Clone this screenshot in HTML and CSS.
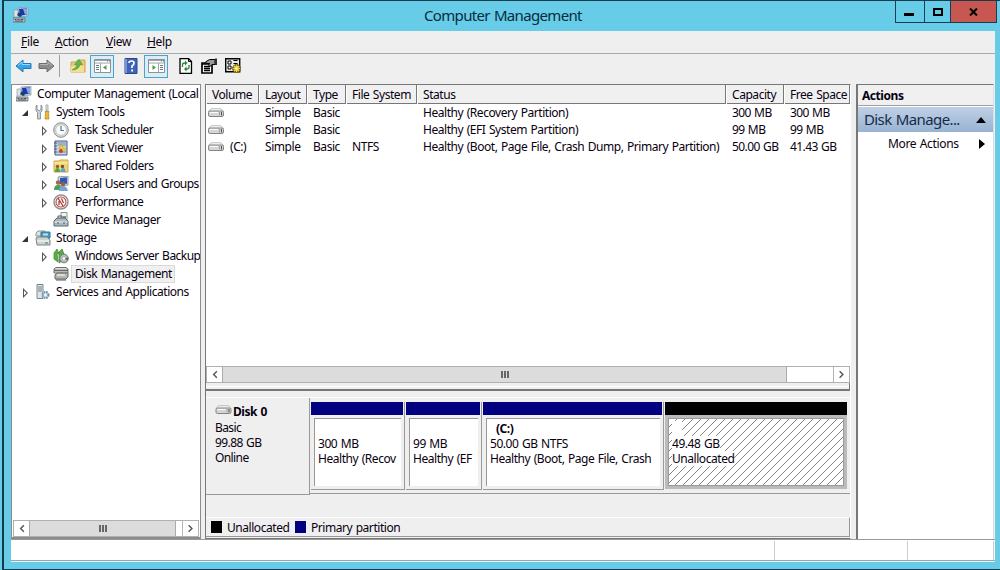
FILE: index.html
```html
<!DOCTYPE html>
<html lang="en">
<head>
  <meta charset="UTF-8">
  <title>Computer Management</title>
  <link rel="stylesheet" href="styles.css">
</head>
<body>
  <!-- shared icons -->
  <svg class="defs" width="0" height="0">
    <symbol id="computer" viewBox="0 0 16 16">
      <path d="M5 1l10-1v9l-9 1z" fill="#c8d3dc" stroke="#78899a" stroke-width=".6"/>
      <path d="M6 2l8-.8v6.6L7 8.5z" fill="#1838a8"/><path d="M10 2l4-.5v6l-2 .3z" fill="#7fa9e6"/>
      <path d="M1 3h4v7H1z" fill="#dfe3e4" stroke="#83909a" stroke-width=".6"/>
      <path d="M4 8l2-3 3 4-2 1z" fill="#183b70"/>
      <path d="M0 11h12v4H0z" fill="#c4cacd" stroke="#59666f" stroke-width=".8"/>
      <path d="M1.500 12.500h2m1 0h2m1 0h3M2 14h8" stroke="#48545c"/>
    </symbol>
    <symbol id="drive" viewBox="0 0 16 10">
      <path d="M3 .7h10l2.500 2.800H.5z" fill="#f5f5f5" stroke="#aaa" stroke-width=".7"/>
      <rect x=".5" y="3" width="15" height="5.500" rx="1.500" fill="#d4d5d4" stroke="#858585"/>
      <path d="M2 4.500h8" stroke="#fafafa"/><path d="M11.500 4v3.500" stroke="#9aa89c"/><path d="M13.500 4v3.500" stroke="#395e40"/>
    </symbol>
  </svg>

  <div class="window">
    <header class="titlebar">
      <svg class="app-icon" width="16" height="16"><use href="#computer"/></svg>
      <h1>Computer Management</h1>
      <div class="controls">
        <button class="min" aria-label="Minimize"><svg width="28" height="21"><path d="M8 13.500h10" stroke="#000" stroke-width="3"/></svg></button>
        <button class="max" aria-label="Maximize"><svg width="25" height="21"><path d="M9 8h8v6H9z" fill="none" stroke="#000" stroke-width="2"/></svg></button>
        <button class="close" aria-label="Close"><svg width="45" height="21"><path d="M19 7.500l7 7M26 7.500l-7 7" stroke="#000" stroke-width="2"/></svg></button>
      </div>
    </header>

    <div class="content">
      <nav class="menu">
        <span class="m-file"><u>F</u>ile</span><span class="m-action"><u>A</u>ction</span><span class="m-view"><u>V</u>iew</span><span class="m-help"><u>H</u>elp</span>
      </nav>

      <div class="toolbar">
        <svg class="t-back" width="17" height="16" viewBox="0 0 17 16"><path d="M1 8l7-6v3.500h8v5H8V14z" fill="#38a5e8" stroke="#2877b3"/><path d="M3 7.500l4-3.500v2.500h8" stroke="#96d9fa" fill="none"/></svg>
        <svg class="t-forward" width="17" height="16" viewBox="0 0 17 16"><path d="M16 8L9 2v3.500H1v5h8V14z" fill="#8c8c8c" stroke="#6d6d6d"/><path d="M2 6.500h8V4l4 3.500" stroke="#b5b5b5" fill="none"/></svg>
        <i class="tool-sep"></i>
        <svg class="t-up" width="16" height="16" viewBox="0 0 16 16"><path d="M1 4h5l1.500-2H15v12H1z" fill="#e8ca70" stroke="#caa653"/><path d="M1 8h13v6H1z" fill="#f4df91"/><path d="M2.500 11.500q4-1 4.500-5H4.500L9 1.500l3.500 5H10q-1 5-7.500 5.500z" fill="#60b946" stroke="#43943a" stroke-width=".6"/></svg>
        <span class="pressed"><svg width="17" height="14" viewBox="0 0 17 14"><path d="M.5.500h16v13H.5z" fill="#fff" stroke="#8b9298"/><path d="M1 1.500h15M1 4h15" stroke="#9ba4aa"/><path d="M13 2h1m1 0h1" stroke="#486"/><path d="M6.500 4v9" stroke="#9ba4aa"/><path d="M2 6.500h3m-3 2h3m-3 2h3" stroke="#617887"/><path d="M12.500 6v5L9 8.500z" fill="#48a03d"/></svg></span>
        <svg class="t-help" width="14" height="16" viewBox="0 0 14 16"><path d="M1 .5h12v15H1z" fill="#4063b8" stroke="#28468c"/><path d="M2 1v14" stroke="#7894d1" stroke-width="2"/><path d="M5 5q0-2 2.500-2T10 5t-2 3v2" fill="none" stroke="#fff" stroke-width="1.700"/><path d="M7.200 11.500H9v2H7.200z" fill="#fff"/></svg>
        <span class="pressed second"><svg width="17" height="14" viewBox="0 0 17 14"><path d="M.5.500h16v13H.5z" fill="#fff" stroke="#8b9298"/><path d="M1 1.500h15M1 4h15" stroke="#9ba4aa"/><path d="M13 2h1m1 0h1" stroke="#486"/><path d="M10.500 4v9" stroke="#9ba4aa"/><path d="M12 6.500h3m-3 2h3m-3 2h3" stroke="#617887"/><path d="M4.500 6v5L8 8.500z" fill="#48a03d"/></svg></span>
        <svg class="t-refresh" width="14" height="16" viewBox="0 0 14 16"><path d="M1 .5h8.500l3 3v12H1z" fill="#fff" stroke="#000" stroke-width="1.300"/><path d="M9.500.500v3h3" fill="none" stroke="#000"/><path d="M3.500 9V6.500Q3.500 5 6 5h1M10 7v2.500Q10 11 7.500 11H6" fill="none" stroke="#218a32" stroke-width="1.300"/><path d="M6 2.500v5L8.500 5zM7.500 8.500v5L5 11z" fill="#218a32"/></svg>
        <svg class="t-props" width="16" height="16" viewBox="0 0 16 16"><path d="M1 5h10v10H1z" fill="#fff" stroke="#000" stroke-width="1.700"/><path d="M1 6h9M3 8.500h6m-6 2h6m-6 2h6" stroke="#000" stroke-width="1.400"/><path d="M4.500 4l4-2.500H14v5h-3L9 8.500 7.500 7l1-1.500H6z" fill="#999" stroke="#000"/><path d="M14 .5h2V7h-2z" fill="#333"/></svg>
        <svg class="t-settings" width="17" height="16" viewBox="0 0 17 16"><path d="M.7.700h14v13H.7z" fill="#e9e9e9" stroke="#000" stroke-width="1.400"/><path d="M3 3h3v3H3zm5.500-.5h4M8.500 5.500h4M3 8h3v3H3z" fill="#fff" stroke="#000"/><path d="M11.500 6v9M7 10.500h9M8.500 7.500l6 6m0-6l-6 6" stroke="#443b09" stroke-width="2.600"/><path d="M11.500 6.500v8M7.500 10.500h8M8.800 7.800l5.400 5.400m0-5.400l-5.400 5.400" stroke="#f1d83d" stroke-width="1.600"/><circle cx="11.500" cy="10.500" r="1" fill="#fff"/></svg>
      </div>

      <main class="panes">
        <aside class="tree">
          <div class="tree-items">
            <div class="row root"><svg width="16" height="16"><use href="#computer"/></svg><span>Computer Management (Local</span></div>
            <div class="row group"><i class="open"></i>
              <svg width="16" height="16" viewBox="0 0 16 16"><path d="M2 1v4l2 2 2-2V1l1 1v5L5.500 8.500V15h-3V8.500L1 7V2z" fill="#cad0d3" stroke="#7b858b" stroke-width=".8"/><path d="M11 1h2v6h-2z" fill="#e4e9eb" stroke="#7b858b" stroke-width=".6"/><path d="M10 7.500h4l-.5 2 .5 5.500h-4l.5-5.500z" fill="#efb72d" stroke="#b48121" stroke-width=".7"/></svg><span>System Tools</span></div>
            <div class="row leaf"><i class="shut"></i>
              <svg width="16" height="16" viewBox="0 0 16 16"><circle cx="8" cy="8" r="7.300" fill="#d9dcd8" stroke="#8b8f8d"/><circle cx="8" cy="8" r="5.300" fill="#f8fafc" stroke="#b1b9be" stroke-width=".7"/><path d="M8 4v4.500h3" fill="none" stroke="#53738f" stroke-width="1.200"/></svg><span>Task Scheduler</span></div>
            <div class="row leaf"><i class="shut"></i>
              <svg width="16" height="16" viewBox="0 0 16 16"><path d="M2 1h12v14H2z" fill="#c6d4e4" stroke="#465b86"/><path d="M4.500 3H13m-8.500 2H13m-8.500 7H13" stroke="#778da8"/><path d="M1 3h3M1 6h3M1 9h3M1 12h3" stroke="#46577b"/><path d="M6 9l2-5 3 5z" fill="#f0ce3d" stroke="#b19028" stroke-width=".5"/><circle cx="8" cy="11" r="2" fill="#cf3b36"/><circle cx="11" cy="9" r="2" fill="#e9c02f"/></svg><span>Event Viewer</span></div>
            <div class="row leaf"><i class="shut"></i>
              <svg width="16" height="16" viewBox="0 0 16 16"><path d="M1 3h5l1-1h8v12H1z" fill="#f0d579" stroke="#c9a848"/><path d="M1 5h14" stroke="#fff0aa"/><circle cx="4.500" cy="8.500" r="1.700" fill="#92602e"/><circle cx="9.500" cy="8.500" r="1.700" fill="#735125"/><path d="M2 14q0-4 2.500-4T7 14z" fill="#56a24d"/><path d="M7.500 14q0-4 2.500-4t2.500 4z" fill="#5ba7c6"/></svg><span>Shared Folders</span></div>
            <div class="row leaf"><i class="shut"></i>
              <svg width="16" height="16" viewBox="0 0 16 16"><path d="M5 1l10-1v9L6 10z" fill="#d4dee6" stroke="#8a9bab"/><path d="M7 2l7-.8v6.500L7 8z" fill="#3156ba"/><circle cx="5" cy="6.500" r="2.200" fill="#a16c41"/><circle cx="10" cy="8" r="2.200" fill="#986334"/><path d="M1 14q0-5 4-5t4 5z" fill="#4d9e60"/><path d="M6 15q0-5 4-5t5 5z" fill="#7ba4d2"/></svg><span class="snug">Local Users and Groups</span></div>
            <div class="row leaf"><i class="shut"></i>
              <svg width="16" height="16" viewBox="0 0 16 16"><circle cx="8" cy="8" r="7" fill="#fff" stroke="#8f918f" stroke-width="1.500"/><circle cx="8" cy="8" r="5" fill="#fafafa" stroke="#bd4b43" stroke-width="1.100"/><path d="M5 4l5 8M8.500 4.500L10.500 9M6 7v4" stroke="#a83432" stroke-width="1.200"/></svg><span>Performance</span></div>
            <div class="row leaf"><i></i>
              <svg width="16" height="16" viewBox="0 0 16 16"><path d="M8 .5h6v7H8z" fill="#f1f5ef" stroke="#86968a"/><path d="M10 4h3v3h-3z" fill="#69a067"/><path d="M1 9l3-3h8l3 3v5H1z" fill="#acb7bd" stroke="#5d6b73"/><path d="M1.500 10h13" stroke="#edf1f3"/><path d="M5 6V4h4v2M5 10v2m6-2v2" fill="none" stroke="#536169"/></svg><span>Device Manager</span></div>
            <div class="row group"><i class="open"></i>
              <svg width="16" height="16" viewBox="0 0 16 16"><path d="M1 3l2-2h7v5H1z" fill="#dde2e2" stroke="#8b9595"/><path d="M6 2h9v6H6z" fill="#3c9acb" stroke="#46738b"/><path d="M8 3.500h5v2H8z" fill="#b8e4f1"/><path d="M1 8l2-1h9l3 3v5H2z" fill="#cdd3d3" stroke="#788486"/><path d="M2 11h12" stroke="#fff"/><path d="M10 13h3" stroke="#45824c"/></svg><span>Storage</span></div>
            <div class="row leaf"><i class="shut"></i>
              <svg width="16" height="16" viewBox="0 0 16 16"><path d="M1 5l3-4 2 5-2-1 1 9-4-3zM6 4l3-3 2 5-2-1v8l-3 2z" fill="#5daf43" stroke="#36832e" stroke-width=".7"/><circle cx="11" cy="10.500" r="4.300" fill="#b5bbb7" stroke="#6f7b75"/><path d="M11 10.500l4-1v3z" fill="#60645c"/><circle cx="11" cy="10.500" r="1.300" fill="#fff"/></svg><span class="snug">Windows Server Backup</span></div>
            <div class="row leaf selected"><i></i>
              <svg width="16" height="16" viewBox="0 0 16 16"><path d="M1 3l2-1.500h10L15 3v4H1z" fill="#d9dad4" stroke="#6e716c"/><path d="M1 4.500h14" stroke="#666" stroke-width="1.500"/><path d="M4 7h11v4l-2 2H2V9z" fill="#b5b6b0" stroke="#686b66"/><path d="M4 9h8" stroke="#fff"/><path d="M3 14h10" stroke="#555"/></svg><span>Disk Management</span></div>
            <div class="row group"><i class="shut"></i>
              <svg width="16" height="16" viewBox="0 0 16 16"><path d="M2 .5h6v14H2z" fill="#dee3e5" stroke="#7b878f"/><path d="M3 3h4M3 5h4M3 7h4" stroke="#75858d"/><circle cx="10.500" cy="11" r="3" fill="#c5dced" stroke="#6a92ad" stroke-width="2" stroke-dasharray="1.600 .8"/><circle cx="10.500" cy="11" r="1" fill="#fff"/></svg><span>Services and Applications</span></div>
          </div>
          <div class="scroll tree-scroll"><svg class="arrow" viewBox="0 0 16 16"><path d="M10 4.500L6.500 8l3.500 3.500"/></svg><div class="thumb"><i></i></div><svg class="arrow right" viewBox="0 0 16 16"><path d="M6 4.500L9.500 8 6 11.500"/></svg></div>
        </aside>

        <section class="middle">
          <div class="volumes">
            <div class="cols head"><span>Volume</span><span>Layout</span><span>Type</span><span>File System</span><span>Status</span><span>Capacity</span><span>Free Space</span></div>
            <div class="cols"><span class="vol"><svg width="16" height="10"><use href="#drive"/></svg></span><span>Simple</span><span>Basic</span><span></span><span>Healthy (Recovery Partition)</span><span>300 MB</span><span>300 MB</span></div>
            <div class="cols"><span class="vol"><svg width="16" height="10"><use href="#drive"/></svg></span><span>Simple</span><span>Basic</span><span></span><span>Healthy (EFI System Partition)</span><span>99 MB</span><span>99 MB</span></div>
            <div class="cols"><span class="vol"><svg width="16" height="10"><use href="#drive"/></svg>(C:)</span><span>Simple</span><span>Basic</span><span>NTFS</span><span>Healthy (Boot, Page File, Crash Dump, Primary Partition)</span><span>50.00 GB</span><span>41.43 GB</span></div>
          </div>
          <div class="scroll list-scroll"><svg class="arrow" viewBox="0 0 16 16"><path d="M10 4.500L6.500 8l3.500 3.500"/></svg><div class="thumb"><i></i></div><svg class="arrow right" viewBox="0 0 16 16"><path d="M6 4.500L9.500 8 6 11.500"/></svg></div>
          <div class="splitter"></div>
          <div class="disk">
            <div class="disk-label"><b><svg width="17" height="10"><use href="#drive"/></svg>Disk 0</b><span>Basic</span><span>99.88 GB</span><span>Online</span></div>
            <div class="parts">
              <div class="part p1"><div class="bar"></div><div class="box"><div><b></b><span>300 MB</span><span>Healthy (Recov</span></div></div></div>
              <div class="part p2"><div class="bar"></div><div class="box"><div><b></b><span>99 MB</span><span>Healthy (EF</span></div></div></div>
              <div class="part p3"><div class="bar"></div><div class="box"><div><b>(C:)</b><span>50.00 GB NTFS</span><span>Healthy (Boot, Page File, Crash</span></div></div></div>
              <div class="part free"><div class="bar"></div><div class="box"><div><b></b><span>49.48 GB</span><span>Unallocated</span></div></div></div>
            </div>
          </div>
          <div class="legend"><i class="black"></i><span class="l-un">Unallocated</span><i class="navy"></i><span>Primary partition</span></div>
        </section>

        <aside class="actions">
          <h2>Actions</h2>
          <div class="action-title"><span>Disk Manage...</span><svg width="10" height="6"><path d="M0 6l5-6 5 6z"/></svg></div>
          <div class="more"><span>More Actions</span><svg width="6" height="10"><path d="M0 0l6 5-6 5z"/></svg></div>
        </aside>
      </main>

      <footer class="status"><span></span><span></span><span></span></footer>
    </div>
  </div>
</body>
</html>
```
FILE: styles.css
```css
* {
  box-sizing: border-box;
}
body {
  margin: 0;
  width: 1000px;
  height: 570px;
  overflow: hidden;
  background: #66cce8;
  color: #080010;
  font-family: "Noto Sans", "Open Sans", sans-serif;
  font-size: 12px;
  line-height: 15px;
  letter-spacing: -0.45px;
  word-spacing: 0.8px;
  white-space: nowrap;
}
h1, h2 {
  margin: 0;
}
svg {
  display: block;
  flex: none;
}
.defs {
  display: none;
}
.window {
  height: 570px;
  margin-left: 2px;
  border: 1px solid #183b4b;
  border-left-width: 2px;
  border-right: 0;
  padding: 0 5px 0 7px;
}

/* title bar */
.titlebar {
  height: 30px;
  display: flex;
}
.app-icon {
  margin: 6px 0 0 2px;
}
.titlebar h1 {
  flex: 1;
  padding-left: 395px;
  font-size: 15px;
  line-height: 29px;
  letter-spacing: -0.66px;
  font-weight: normal;
  color: #082c3d;
}
.controls {
  display: flex;
  height: 22px;
  margin-right: -2px;
  border: 1px solid #173f50;
  border-top: 0;
}
.controls button {
  border: 0;
  padding: 0;
  background: #66cce8;
}
.controls .max {
  border-left: 1px solid #173f50;
  border-right: 1px solid #173f50;
}
.controls .close {
  background: #c75750;
}
.controls svg {
  margin-top: -1px;
}

.content {
  height: 531px;
  background: #efefef;
}
.menu {
  height: 23px;
  display: flex;
  border-bottom: 1px solid #aaa;
  padding-left: 10px;
  line-height: 22px;
  letter-spacing: -0.3px;
}
.menu u {
  text-underline-offset: 1px;
}
.m-file {
  width: 34px;
}
.m-action {
  width: 51px;
}
.m-view {
  width: 41px;
}

/* toolbar */
.toolbar {
  height: 30px;
  padding: 0 0 6px 4px;
  display: flex;
  align-items: center;
}
.t-forward {
  margin-left: 6px;
}
.tool-sep {
  width: 1px;
  height: 22px;
  margin: 0 10px 0 4px;
  background: #a0a0a0;
}
.pressed {
  display: flex;
  align-items: center;
  justify-content: center;
  width: 24px;
  height: 23px;
  margin: 0 10px 0 4px;
  border: 1px solid #4ca3cf;
  background: #dcecf5;
}
.pressed.second {
  margin: 0 11px 0 6px;
}
.t-props {
  margin-left: 8px;
}
.t-settings {
  margin-left: 8px;
}

/* panes */
.panes {
  height: 455px;
  display: flex;
}
.tree {
  width: 190px;
  display: flex;
  flex-direction: column;
  border: 1px solid #8c8c8c;
  border-bottom-width: 2px;
  background: #fff;
}
.tree-items {
  flex: 1;
  overflow: hidden;
}
.row {
  display: flex;
  align-items: center;
  height: 18px;
}
.row.root {
  padding-left: 4px;
}
.row.group {
  padding-left: 9px;
}
.row.leaf {
  padding-left: 28px;
}
.row > i {
  width: 14px;
  height: 10px;
  flex: none;
}
.row span {
  padding: 0 3px;
  margin-left: 1px;
  line-height: 16px;
  border: 1px solid transparent;
}
.row > i.open {
  clip-path: polygon(7px 3px, 7px 9px, 1px 9px);
  background: #333;
}
.row > i.shut {
  margin-top: 2px;
  background: #555;
  clip-path: polygon(evenodd, 2px 0, 7px 5px, 2px 10px, 2px 0, 3px 2.500px, 3px 7.500px, 5.500px 5px, 3px 2.500px);
}
.row.leaf span {
  margin-left: 2px;
}
.row.leaf > i {
  width: 13px;
}
.row .snug {
  padding-right: 0;
  border-right: 0;
  letter-spacing: -0.54px;
}
.selected span {
  padding-right: 2px;
  background: #f0f0f0;
  border-color: #d9d9d9;
}

/* scrollbars */
.scroll {
  display: flex;
  height: 17px;
  border: 1px solid #b0b0b0;
  background: #fff;
}
.arrow {
  width: 16px;
  height: 15px;
  fill: none;
  stroke: #555;
  stroke-width: 1.500;
}
.arrow.right {
  margin-left: auto;
  border-left: 1px solid #b5b5b5;
}
.thumb {
  display: flex;
  align-items: center;
  justify-content: center;
  background: #dcdcdc;
  border: 1px solid #aaa;
  border-width: 0 1px;
}
.thumb i {
  width: 8px;
  height: 7px;
  background: repeating-linear-gradient(90deg, #666 0 2px, #dcdcdc 2px 3px);
}
.tree-scroll {
  margin: 0 1px;
}
.tree-scroll .thumb {
  width: 147px;
  margin-left: -1px;
}
.list-scroll .thumb {
  width: 565px;
  margin-left: -1px;
}

/* volume list and disk map */
.middle {
  width: 646px;
  margin-left: 4px;
  display: flex;
  flex-direction: column;
  border: 1px solid #777;
  border-right-color: #fff;
}
.volumes {
  height: 281px;
  background: #fff;
}
.cols {
  display: grid;
  grid-template-columns: 53px 48px 39px 71px 309px 58px 66px;
  height: 17px;
  line-height: 17px;
}
.cols span {
  padding-left: 6px;
}
.cols span:nth-child(n+6) {
  letter-spacing: -0.6px;
}
.cols .vol {
  display: flex;
  align-items: center;
  gap: 6px;
  padding-left: 2px;
}
.cols.head {
  height: 19px;
  line-height: 19px;
  background: #f0f0f0;
  border-bottom: 1px solid #777;
}
.cols.head span {
  border-right: 1px solid #777;
  border-left: 1px solid #fff;
  padding-left: 5px;
  letter-spacing: -0.45px;
}
.splitter {
  height: 8px;
  border: solid #777;
  border-width: 0 1px 2px 0;
  background: linear-gradient(#efefef 3px, #fff 3px, #fff 4px, #efefef 4px);
}
.disk {
  height: 98px;
  margin-top: 6px;
  display: flex;
  border-top: 1px solid #fff;
}
.disk-label {
  flex: none;
  width: 104px;
  padding: 5px 0 0 9px;
  border-right: 1px solid #999;
  border-bottom: 1px solid #999;
}
.disk-label b {
  display: flex;
  line-height: 17px;
}
.disk-label b svg {
  margin-top: 2px;
  margin-right: 1px;
}
.disk-label span {
  display: block;
  letter-spacing: -0.6px;
}
.parts {
  flex: 1;
  display: flex;
  height: 96px;
  padding: 4px 3px 3px 1px;
  border-bottom: 1px solid #999;
}
.part {
  flex: none;
  border-right: 1px solid #999;
  border-bottom: 1px solid #999;
}
.p1 {
  width: 94px;
}
.p2 {
  width: 76px;
  margin-left: 1px;
}
.p3 {
  width: 181px;
  margin-left: 1px;
}
.bar {
  height: 13px;
  margin-right: 1px;
  background: #000080;
}
.box {
  height: 74px;
  padding: 3px;
}
.box div {
  height: 68px;
  overflow: hidden;
  padding: 2px 0 0 3px;
  background: #fff;
  border: 1px solid #999;
  border-width: 1px 0 0 1px;
}
.box b {
  display: block;
  height: 15px;
  padding-left: 6px;
}
.box span {
  display: block;
  width: fit-content;
}
.free {
  width: 182px;
  margin-left: 1px;
  border: 0;
}
.free .bar {
  margin: 0;
  background: #000;
}
.free .box {
  background: #bbb;
}
.free .box div {
  border: 1px solid #999;
  background: repeating-linear-gradient(135deg, #fff 0 5px, #888 5px 5.660px);
}
.free .box b {
  width: 10px;
  background: #fff;
}
.free .box span {
  background: #fff;
}
.legend {
  height: 20px;
  margin-top: auto;
  margin-bottom: 1px;
  display: flex;
  align-items: center;
  padding-left: 5px;
  border: solid #999;
  border-width: 0 1px 1px 0;
  border-top: 1px solid #fff;
}
.legend i {
  width: 11px;
  height: 12px;
  margin-right: 5px;
}
.legend .black {
  background: #000;
}
.legend .navy {
  background: #000080;
}
.l-un {
  width: 68px;
}

/* actions */
.actions {
  width: 138px;
  margin-left: 5px;
  border: solid #777;
  border-width: 1px 0 0 2px;
  border-right: 1px solid #ddd;
  background: #fff;
}
.actions h2 {
  height: 21px;
  padding-left: 4px;
  font-size: 12px;
  line-height: 21px;
  background: #f0f0f0;
  border-bottom: 1px solid #a0a0a0;
}
.action-title {
  height: 25px;
  margin-top: 1px;
  padding: 0 7px 0 6px;
  display: flex;
  align-items: center;
  justify-content: space-between;
  font-size: 15px;
  letter-spacing: -0.6px;
  color: #152b48;
  background: linear-gradient(#bfd0e5, #98b3d3);
}
.more {
  display: flex;
  align-items: center;
  justify-content: space-between;
  height: 23px;
  padding: 0 8px 0 30px;
  letter-spacing: -0.35px;
}
.status {
  height: 22px;
  display: grid;
  grid-template-columns: 764px 133px 86px;
  background: #fff;
  border-top: 1px solid #999;
  border-bottom: 1px solid #8ab;
}
.status span {
  border-right: 1px solid #ccc;
  margin-top: 1px;
}
```
